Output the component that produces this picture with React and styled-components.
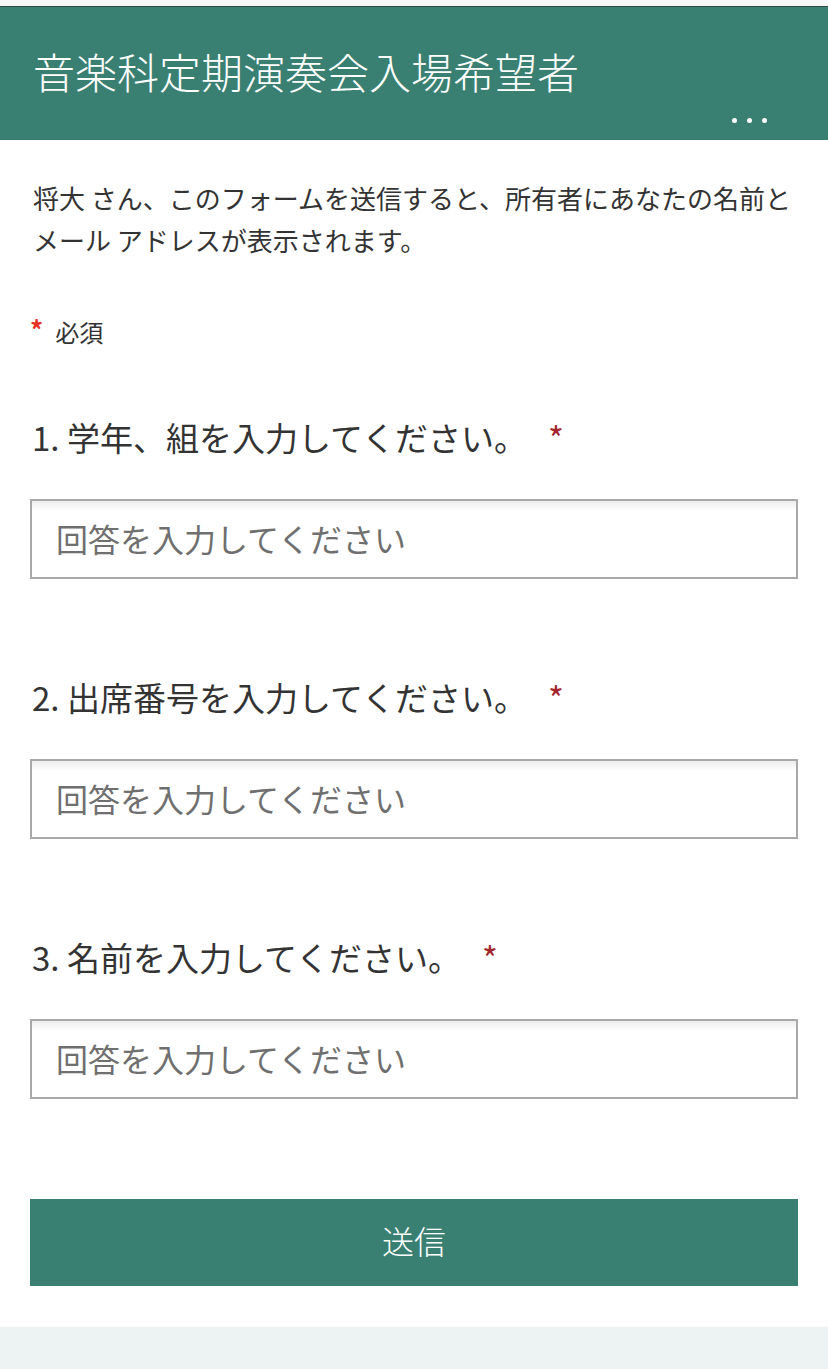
import React from "react";
import styled, { createGlobalStyle } from "styled-components";

const GlobalStyle = createGlobalStyle`
  html, body {
    margin: 0;
    padding: 0;
    background-color: #ffffff;
  }
  body {
    font-family: "Noto Sans CJK JP", "Noto Sans", sans-serif;
    color: #333333;
  }
  * {
    box-sizing: border-box;
  }
`;

const Page = styled.div`
  display: flex;
  flex-direction: column;
  min-height: 1369px;
`;

const TopStrip = styled.div`
  height: 7px;
  background-color: #f6f6f6;
  border-bottom: 1px solid #2c4a44;
`;

const Header = styled.header`
  display: flex;
  flex-direction: column;
  height: 133px;
  padding: 36px 61px 0 33px;
  background-color: #3a8072;
`;

const Title = styled.h1`
  margin: 0;
  font-size: 42px;
  line-height: 56px;
  font-weight: 300;
  color: #ffffff;
  white-space: nowrap;
`;

const MenuDots = styled.div`
  display: flex;
  justify-content: flex-end;
  gap: 10px;
  margin-top: 19px;
`;

const Dot = styled.span`
  width: 5px;
  height: 5px;
  border-radius: 50%;
  background-color: #ffffff;
`;

const Body = styled.main`
  display: flex;
  flex-direction: column;
  padding: 37px 30px 41px;
  background-color: #ffffff;
`;

const Notice = styled.p`
  margin: 0 0 0 3px;
  font-size: 26px;
  line-height: 42px;
  color: #333333;
`;

const Required = styled.div`
  display: flex;
  align-items: flex-start;
  margin-top: 53px;
  font-size: 24px;
  line-height: 36px;
  color: #333333;
`;

const RedStar = styled.span`
  color: #e63323;
  font-weight: 700;
  font-size: 26px;
  line-height: 26px;
  margin: 2px 12px 0 0;
`;

const Question = styled.div`
  display: flex;
  flex-direction: column;
  margin-top: ${(p) => p.$gap}px;
`;

const Label = styled.div`
  display: flex;
  align-items: flex-start;
  padding-left: 2px;
  margin-top: -2px;
  margin-bottom: 3px;
  font-size: 33px;
  line-height: 48px;
  color: #333333;
  white-space: nowrap;
`;

const Star = styled.span`
  color: #a4262c;
  font-size: 34px;
  line-height: 34px;
  margin: 8px 0 0 21px;
`;

const Input = styled.input`
  margin-top: 35px;
  width: 100%;
  height: 80px;
  padding: 0 24px 2px;
  border: 2px solid #a8a8a8;
  border-radius: 0;
  outline: none;
  background: linear-gradient(#ededed, #ffffff 10px);
  font-family: "Noto Sans CJK JP", "Noto Sans", sans-serif;
  font-size: 32px;
  color: #333333;

  &::placeholder {
    color: #6f6f6f;
  }
`;

const SubmitButton = styled.button`
  margin-top: 100px;
  width: 100%;
  height: 87px;
  padding: 0 0 5px;
  border: none;
  background-color: #3a8072;
  color: #ffffff;
  font-family: "Noto Sans CJK JP", "Noto Sans", sans-serif;
  font-size: 32px;
  font-weight: 300;
  cursor: pointer;
`;

const Footer = styled.div`
  flex: 1;
  min-height: 42px;
  background-color: #edf2f2;
`;

const QUESTIONS = [
  { key: "q1", label: "1. 学年、組を入力してください。", gap: 65 },
  { key: "q2", label: "2. 出席番号を入力してください。", gap: 96 },
  { key: "q3", label: "3. 名前を入力してください。", gap: 96 },
];

const App = () => {
  return (
    <>
      <GlobalStyle />
      <Page>
        <TopStrip />
        <Header>
          <Title>音楽科定期演奏会入場希望者</Title>
          <MenuDots>
            <Dot />
            <Dot />
            <Dot />
          </MenuDots>
        </Header>
        <Body>
          <Notice>
            将大 さん、このフォームを送信すると、所有者にあなたの名前とメール アドレスが表示されます。
          </Notice>
          <Required>
            <RedStar>*</RedStar>
            必須
          </Required>
          {QUESTIONS.map((q) => (
            <Question key={q.key} $gap={q.gap}>
              <Label>
                {q.label}
                <Star>*</Star>
              </Label>
              <Input type="text" placeholder="回答を入力してください" />
            </Question>
          ))}
          <SubmitButton>送信</SubmitButton>
        </Body>
        <Footer />
      </Page>
    </>
  );
};

export default App;
